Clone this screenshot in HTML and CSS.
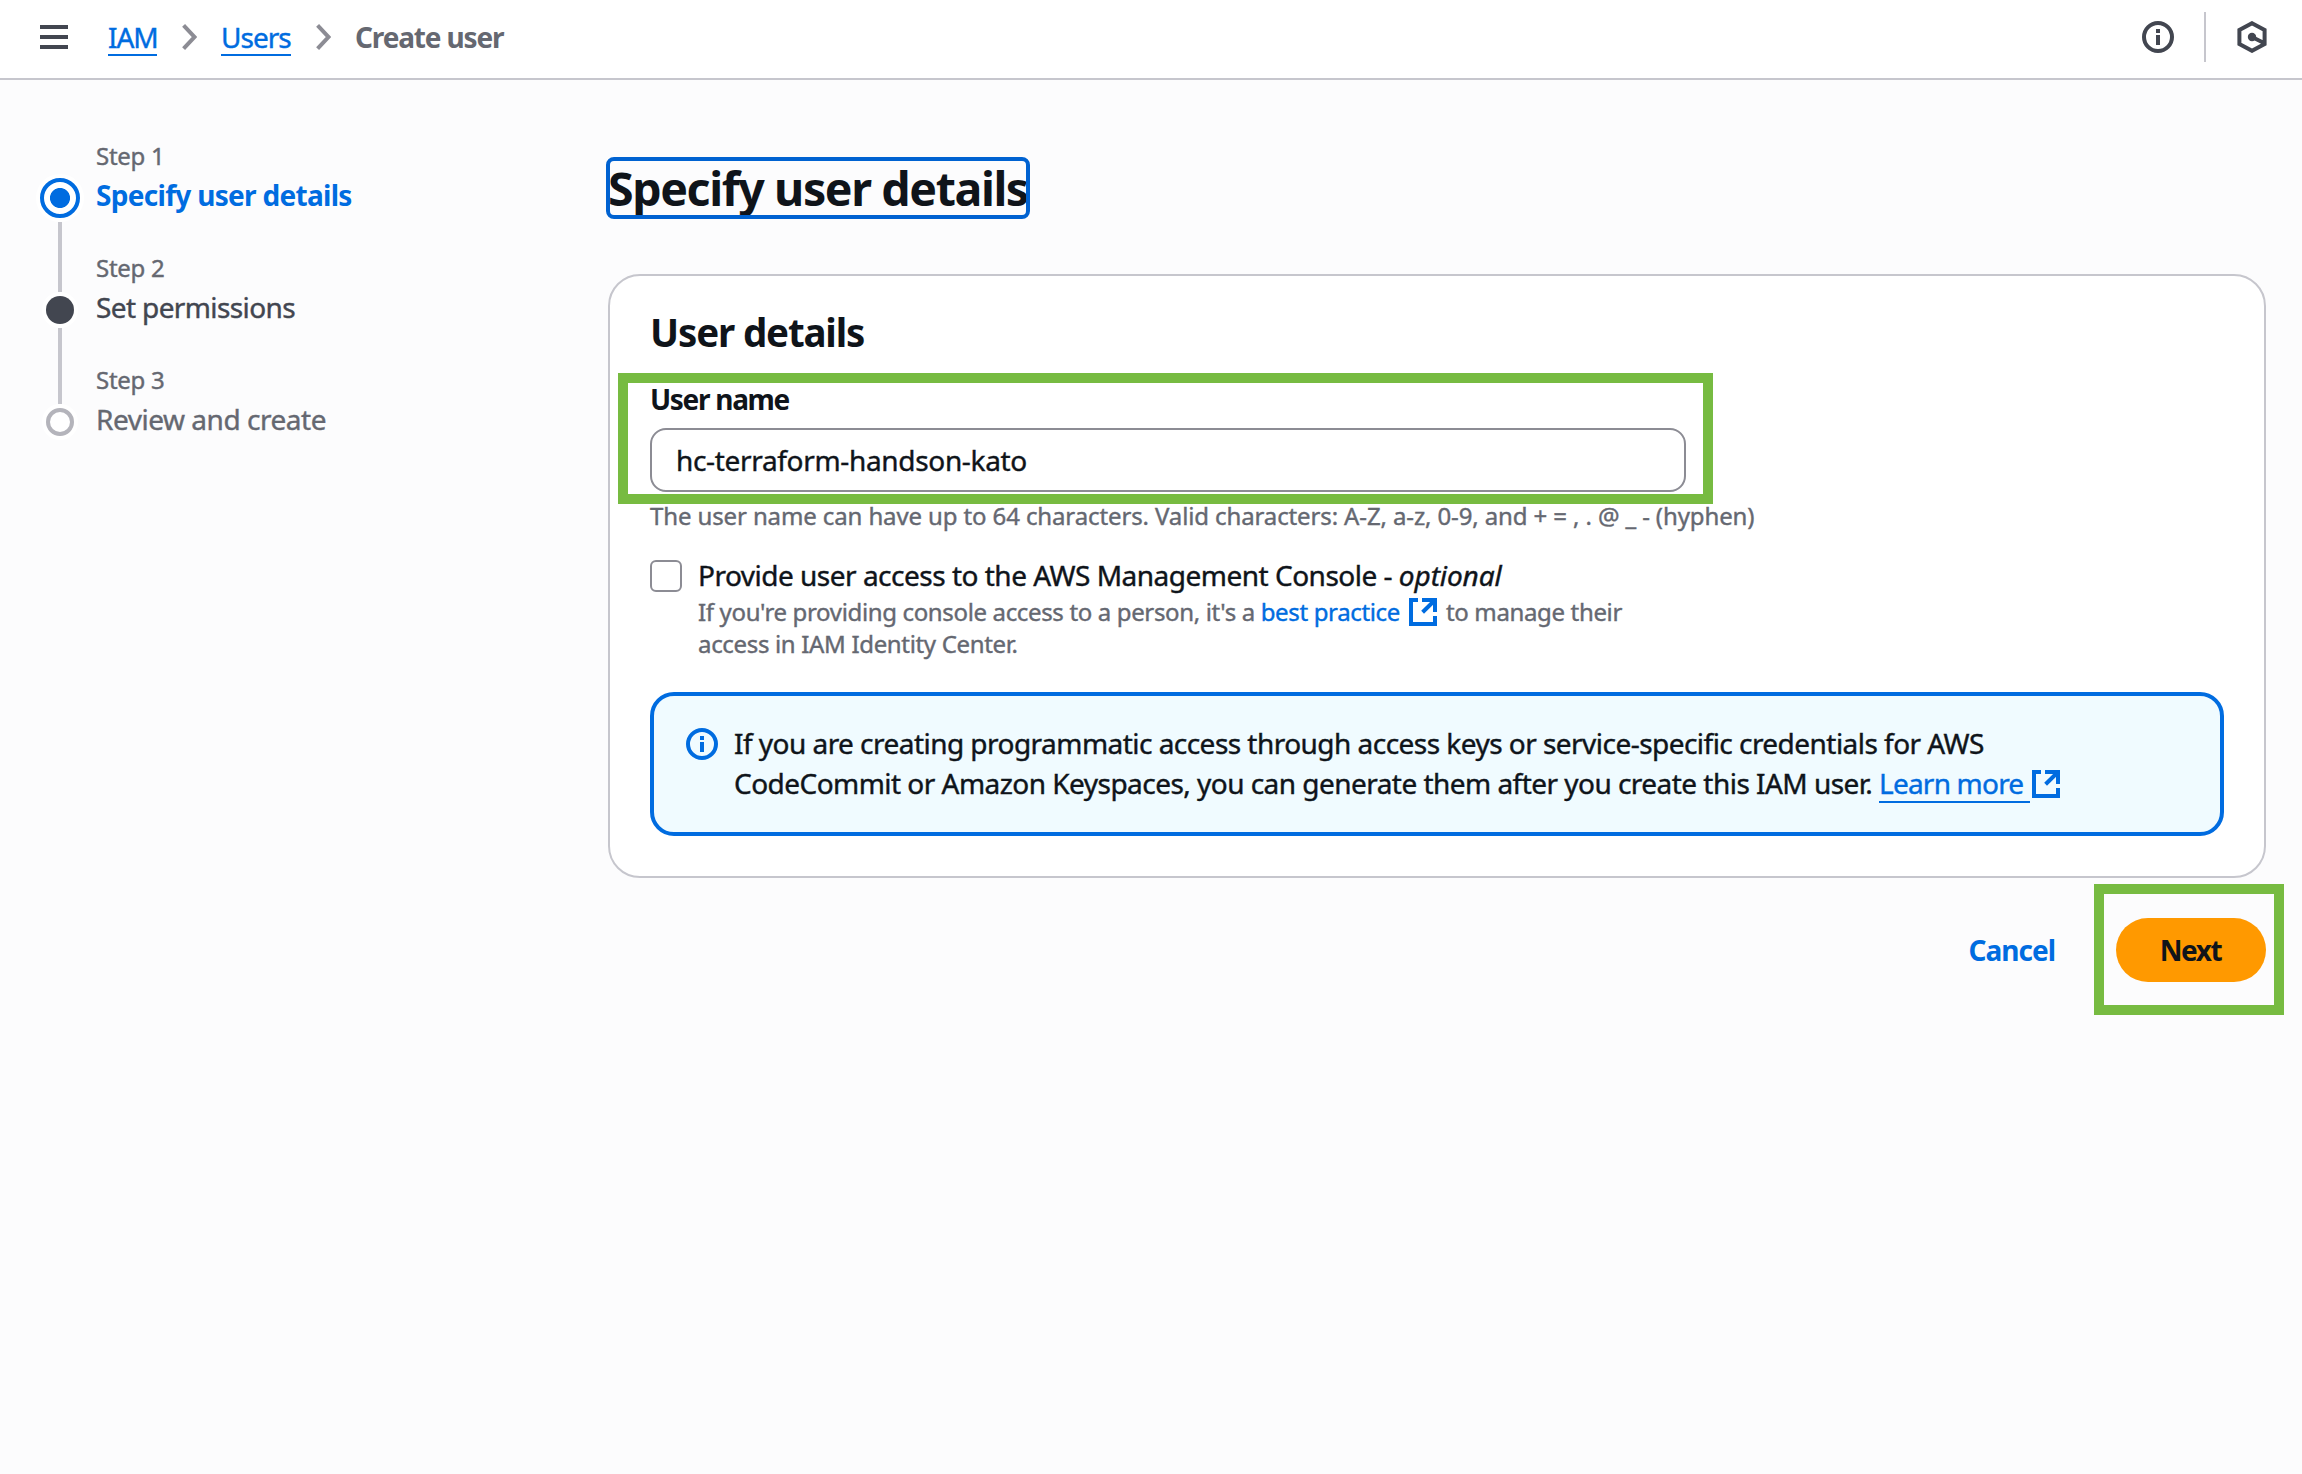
FILE: index.html
```html
<!DOCTYPE html>
<html lang="en">
<head>
<meta charset="utf-8">
<title>Create user | IAM</title>
<link rel="stylesheet" href="styles.css">
</head>
<body>
<header class="topbar">
  <svg class="menu" viewBox="0 0 28 24"><path d="M0 2H28M0 12H28M0 22H28"/></svg>
  <nav class="crumbs">
    <a class="crumb crumb-iam" href="#">IAM</a>
    <svg class="chevron" viewBox="0 0 15 28"><path d="M1.6 2.4L12.4 14L1.6 25.6"/></svg>
    <a class="crumb crumb-users" href="#">Users</a>
    <svg class="chevron" viewBox="0 0 15 28"><path d="M1.6 2.4L12.4 14L1.6 25.6"/></svg>
    <span class="crumb-current">Create user</span>
  </nav>
  <div class="tools">
    <svg class="info" viewBox="0 0 32 32"><circle cx="16" cy="16" r="14"/><path d="M16 8V12M16 14V24"/></svg>
    <span class="divider"></span>
    <svg class="hexagon" viewBox="0 0 32 32"><path d="M16 2.2L28.6 9V23L16 29.8L3.4 23V9ZM16 16L28 22"/><circle cx="16" cy="16" r="4.2"/></svg>
  </div>
</header>
<div class="layout">
  <ol class="steps">
    <li class="step">
      <span class="step-label">Step 1</span>
      <div class="rail"><span class="dot dot-active"></span><span class="line line-first"></span></div>
      <span class="step-title title-active">Specify user details</span>
    </li>
    <li class="step">
      <span class="step-label">Step 2</span>
      <div class="rail"><span class="dot dot-filled"></span><span class="line"></span></div>
      <span class="step-title title-next">Set permissions</span>
    </li>
    <li class="step">
      <span class="step-label">Step 3</span>
      <div class="rail"><span class="dot dot-empty"></span></div>
      <span class="step-title title-later">Review and create</span>
    </li>
  </ol>
  <main class="content">
    <h1 class="page-title">Specify user details</h1>
    <section class="card">
      <h2 class="card-title">User details</h2>
      <div class="field">
        <label class="field-label" for="username">User name</label>
        <input class="field-input" id="username" type="text" value="hc-terraform-handson-kato">
        <span class="highlight highlight-field"></span>
      </div>
      <p class="hint">The user name can have up to 64 characters. Valid characters: A-Z, a-z, 0-9, and + = , . @ _ - (hyphen)</p>
      <div class="option">
        <span class="checkbox"></span>
        <div>
          <div class="option-label">Provide user access to the AWS Management Console - <em>optional</em></div>
          <div class="option-text">If you're providing console access to a person, it's a <a class="best" href="#">best practice</a><svg class="external external-option" viewBox="0 0 28 28"><path d="M9 2H2V26H26V18M13 2H26V14M25 3L13.6 14.2"/></svg><span class="manage">to manage their</span><br><span class="center">access in IAM Identity Center.</span></div>
        </div>
      </div>
      <div class="alert">
        <svg class="info info-blue" viewBox="0 0 32 32"><circle cx="16" cy="16" r="14"/><path d="M16 8V12M16 14V24"/></svg>
        <div class="alert-text">If you are creating programmatic access through access keys or service-specific credentials for AWS<br>CodeCommit or Amazon Keyspaces, you can generate them after you create this IAM user. <a class="learn" href="#">Learn more</a><svg class="external external-alert" viewBox="0 0 28 28"><path d="M9 2H2V26H26V18M13 2H26V14M25 3L13.6 14.2"/></svg></div>
      </div>
    </section>
    <div class="actions">
      <a class="cancel" href="#">Cancel</a>
      <div class="next-wrap">
        <button class="next" type="button">Next</button>
        <span class="highlight highlight-next"></span>
      </div>
    </div>
  </main>
</div>
</body>
</html>
```
FILE: styles.css
```css
* { box-sizing: border-box; }
body {
  margin: 0;
  min-height: 1474px;
  background: #fcfcfd;
  color: #0f141a;
  font-family: "Noto Sans", "Open Sans", sans-serif;
  font-size: 28px;
  line-height: 40px;
  -webkit-text-stroke: 0.4px;
}
a { color: #006ce0; text-decoration: none; }
svg { fill: none; stroke: currentColor; stroke-width: 4; flex: none; }

.topbar {
  display: flex;
  align-items: center;
  height: 80px;
  padding: 0 34px 5px 40px;
  background: #fff;
  border-bottom: 2px solid #c6c6cd;
  color: #424650;
}
.menu { width: 28px; height: 24px; }
.crumbs { display: flex; align-items: center; margin-left: 40px; }
.crumb { height: 38px; line-height: 38px; border-bottom: 2px solid #006ce0; white-space: nowrap; }
.crumb-iam { width: 49px; letter-spacing: -1.1px; }
.crumb-users { width: 70px; letter-spacing: -1px; }
.chevron { width: 15px; height: 28px; margin: 0 24px 0 25px; color: #8c8c94; }
.crumb-current { color: #656871; font-weight: 700; letter-spacing: -1.15px; -webkit-text-stroke: 0; }
.tools { display: flex; align-items: center; margin-left: auto; }
.info { width: 32px; height: 32px; }
.divider { width: 2px; height: 50px; margin: 0 30px; background: #c6c6cd; }
.hexagon { width: 32px; height: 32px; }
.hexagon circle { fill: currentColor; stroke: none; }

.layout { display: flex; }
.steps { width: 608px; margin: 0; padding: 60px 0 0 40px; list-style: none; }
.step { display: grid; grid-template-columns: 40px 1fr; column-gap: 16px; grid-template-rows: 32px 80px; }
.step-label { grid-column: 2; font-size: 24px; line-height: 32px; color: #656871; letter-spacing: -0.3px; }
.step-title { padding-top: 3px; }
.title-active { color: #006ce0; font-weight: 700; letter-spacing: -0.7px; -webkit-text-stroke: 0; }
.title-next { color: #424650; letter-spacing: -0.62px; }
.title-later { color: #656871; letter-spacing: -0.47px; }
.rail { display: flex; flex-direction: column; align-items: center; padding-top: 12px; }
.dot { flex: none; width: 28px; height: 28px; border-radius: 50%; box-shadow: 0 0 0 4px #fff; }
.dot-active { width: 40px; height: 40px; margin-top: -6px; border: 4px solid #006ce0; background: radial-gradient(circle, #006ce0 9.6px, #fff 10.4px); }
.dot-filled { background: #424650; }
.dot-empty { border: 4px solid #b4b4bb; background: #fff; }
.line { flex: none; width: 4px; height: 76px; margin-top: 4px; background: #c6c6cd; }
.line-first { height: 70px; }

.content { width: 1658px; padding-top: 77px; }
.page-title {
  width: 424px;
  height: 62px;
  margin: 0 0 55px -2px;
  border: 4px solid #0062d1;
  border-radius: 8px;
  overflow: hidden;
  white-space: nowrap;
  font-size: 46.5px;
  line-height: 54px;
  font-weight: 700;
  letter-spacing: -1.4px;
  text-indent: -2px;
  -webkit-text-stroke: 0;
}
.card { height: 604px; padding: 32px 40px; border: 2px solid #c6c6cd; border-radius: 32px; background: #fff; }
.card-title { margin: 0 0 23px; font-size: 38.5px; line-height: 48px; font-weight: 700; letter-spacing: -1.15px; -webkit-text-stroke: 0; }
.field { position: relative; width: 1036px; height: 113px; }
.field-label { display: block; height: 49px; font-weight: 700; letter-spacing: -1.3px; -webkit-text-stroke: 0; }
.field-input {
  display: block;
  width: 100%;
  height: 64px;
  padding: 0 24px;
  border: 2px solid #8c8c94;
  border-radius: 16px;
  background: #fff;
  color: inherit;
  font: inherit;
  letter-spacing: -0.33px;
}
.highlight { position: absolute; border: 10px solid #77bb41; pointer-events: none; }
.highlight-field { inset: -6px -27px -12px -32px; }
.highlight-next { inset: -34px -18px -33px -22px; }
.hint { margin: 8px 0 23px; font-size: 24px; line-height: 32px; color: #656871; letter-spacing: -0.12px; }
.option { display: flex; gap: 16px; }
.checkbox { width: 32px; height: 32px; margin-top: 5px; border: 2px solid #8c8c94; border-radius: 6px; }
.option-label { letter-spacing: -0.5px; height: 41px; }
.option-label em { letter-spacing: -0.1px; }
.option-text { font-size: 24px; line-height: 32px; color: #656871; letter-spacing: -0.35px; white-space: nowrap; }
.external { width: 28px; height: 28px; color: #006ce0; }
.external-option { margin: 0 9px; vertical-align: -5px; }
.external-alert { margin-left: 2px; vertical-align: -4px; }
.center { letter-spacing: -0.33px; }
.alert { display: flex; gap: 16px; height: 144px; margin-top: 32px; padding: 27px 32px; border: 4px solid #006ce0; border-radius: 24px; background: #f0fbff; }
.alert-text { letter-spacing: -0.535px; white-space: nowrap; }
.info-blue { margin-top: 5px; color: #006ce0; }
.learn { display: inline-block; width: 151px; height: 40px; border-bottom: 2px solid; vertical-align: top; letter-spacing: -0.8px; }
.actions { display: flex; justify-content: flex-end; align-items: center; margin-top: 40px; font-weight: 700; -webkit-text-stroke: 0; }
.cancel { margin-right: 61px; letter-spacing: -1px; }
.next-wrap { position: relative; width: 150px; height: 64px; }
.next { width: 150px; height: 64px; padding: 0 1px 0 0; border: 0; border-radius: 32px; background: #ff9900; color: #0f141a; font: inherit; letter-spacing: -1.5px; }
```
